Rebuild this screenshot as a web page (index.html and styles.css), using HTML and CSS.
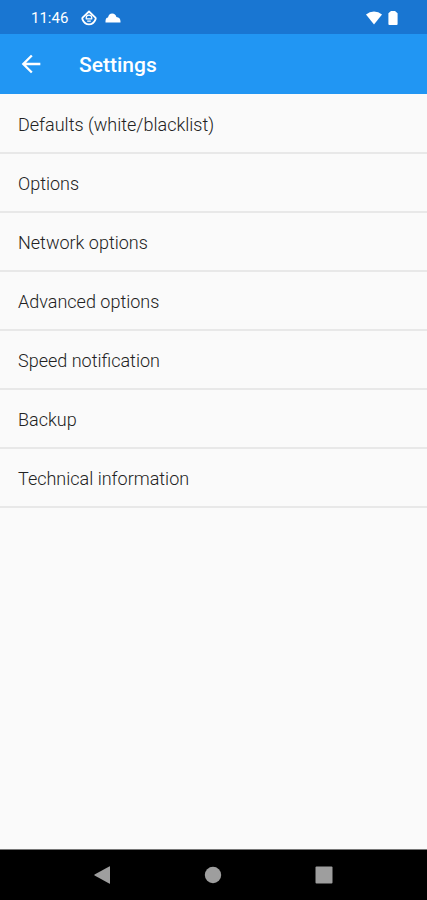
FILE: index.html
```html
<!DOCTYPE html>
<html lang="en">
<head>
<meta charset="utf-8">
<meta name="viewport" content="width=device-width, initial-scale=1">
<title>Settings</title>
<link rel="stylesheet" href="styles.css">
</head>
<body>
<div class="screen">
  <div class="status-bar">
    <div class="status-group">
      <time class="clock">11:46</time>
      <svg viewBox="0 0 16 16" width="16" height="16" aria-hidden="true">
        <path d="M8 1.500 14.400 7.600Q15 8.400 14.400 9.600 12.500 14.300 8 14.300T1.600 9.600Q1 8.400 1.600 7.600Z" fill="none" stroke="#fff" stroke-width="1.800" stroke-linejoin="round"/>
        <path d="M5.200 9V8a2.800 2.800 0 0 1 5.600 0v1M4.800 8.800h6.400M6.200 11.200h3.600" fill="none" stroke="#fff" stroke-width="1.200"/>
      </svg>
      <svg viewBox="0 0 16 12" width="16" height="12" aria-hidden="true">
        <path d="M.5 10.500V9Q.5 5.800 3 5.400 3.800 1.400 7.200 1.400T11.400 5Q15.500 5.400 15.500 9.500V10.500Z" fill="#fff"/>
      </svg>
    </div>
    <div class="status-group status-right">
      <svg viewBox="0 0 18 16" width="18" height="16" aria-hidden="true">
        <path d="M9 14.500 1 4.400a12.500 12.500 0 0 1 16 0Z" fill="#fff"/>
      </svg>
      <svg viewBox="0 0 10 16" width="10" height="16" aria-hidden="true">
        <path d="M3 1h4L9.600 3.200V14q0 1-1 1H1.400q-1 0-1-1V3.200Z" fill="#fff"/>
      </svg>
    </div>
  </div>
  <header class="app-bar">
    <button class="back" type="button" aria-label="Back">
      <svg viewBox="0 0 24 24" width="28" height="28" aria-hidden="true">
        <path d="M20 11H7.830l5.590-5.590L12 4l-8 8 8 8 1.410-1.410L7.830 13H20z" fill="#fff"/>
      </svg>
    </button>
    <h1 class="title">Settings</h1>
  </header>
  <main class="content">
    <ul class="list">
      <li><button class="row" type="button">Defaults (white/blacklist)</button></li>
      <li><button class="row" type="button">Options</button></li>
      <li><button class="row" type="button">Network options</button></li>
      <li><button class="row" type="button">Advanced options</button></li>
      <li><button class="row" type="button">Speed notification</button></li>
      <li><button class="row" type="button">Backup</button></li>
      <li><button class="row" type="button">Technical information</button></li>
    </ul>
  </main>
  <nav class="nav-bar" aria-label="System">
    <button type="button" aria-label="Back"><svg viewBox="0 0 20 20" width="20" height="20" aria-hidden="true"><path d="M17 1.800v16.400q0 .8-.8.4L1.600 10.500q-.8-.5 0-1L16.200 1.400q.8-.4.8.4Z" fill="#9e9e9e"/></svg></button>
    <button type="button" aria-label="Home"><svg viewBox="0 0 20 20" width="20" height="20" aria-hidden="true"><circle cx="10" cy="10" r="8.200" fill="#9e9e9e"/></svg></button>
    <button type="button" aria-label="Recent apps"><svg viewBox="0 0 20 20" width="20" height="20" aria-hidden="true"><rect x="1.500" y="1.500" width="17" height="17" rx="1" fill="#9e9e9e"/></svg></button>
  </nav>
</div>
</body>
</html>
```
FILE: styles.css
```css
* {
  box-sizing: border-box;
}

body {
  margin: 0;
  background: #fafafa;
  color: #222;
  font-family: Roboto, "Liberation Sans", sans-serif;
}

button {
  padding: 0;
  border: 0;
  background: none;
  color: inherit;
  font: inherit;
}

svg {
  display: block;
}

.screen {
  display: flex;
  flex-direction: column;
  min-height: 100vh;
}

.status-bar {
  display: flex;
  align-items: center;
  justify-content: space-between;
  height: 34px;
  padding: 2px 29px 0 31px;
  background: #1976d2;
  color: #fff;
}

.status-group {
  display: flex;
  align-items: center;
  gap: 8px;
}

.status-right {
  gap: 5px;
}

.clock {
  margin-right: 5px;
  font-size: 15px;
  line-height: 20px;
}

.app-bar {
  display: flex;
  align-items: center;
  height: 60px;
  padding-left: 17px;
  background: #2196f3;
  color: #fff;
}

.back {
  margin-right: 34px;
}

.title {
  margin: 0;
  padding-top: 2px;
  font-size: 21px;
  font-weight: 500;
  line-height: 28px;
}

.content {
  flex: 1;
  padding-top: 1px;
}

.list {
  margin: 0;
  padding: 0;
  list-style: none;
}

.row {
  display: block;
  width: 100%;
  height: 59px;
  padding: 2px 18px 0;
  border-bottom: 2px solid #e8e8e8;
  font-size: 18px;
  font-weight: 300;
  line-height: 24px;
  text-align: left;
}

.nav-bar {
  display: flex;
  align-items: center;
  justify-content: space-around;
  height: 51px;
  padding: 0 48px;
  border-top: 1px solid #777;
  background: #000;
}
```
